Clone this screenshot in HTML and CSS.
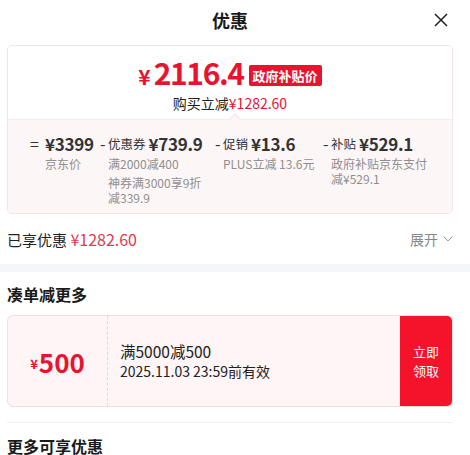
FILE: index.html
```html
<!DOCTYPE html>
<html lang="zh-CN">
<head>
<meta charset="utf-8">
<link rel="stylesheet" href="styles.css">
</head>
<body>
<div class="page">
  <header class="header">
    <span></span>
    <h1 class="title">优惠</h1>
    <button class="close" aria-label="关闭">
      <svg width="14" height="14" viewBox="0 0 14 14"><path d="M1 1L13 13M13 1L1 13" stroke="#222" stroke-width="1.5" fill="none"/></svg>
    </button>
  </header>

  <section class="card">
    <div class="card-top">
      <div class="price-row">
        <span class="price"><span class="yen">¥</span>2116.4</span>
        <span class="badge">政府补贴价</span>
      </div>
      <div class="save">购买立减<span class="red">¥1282.60</span></div>
    </div>
    <div class="card-bottom">
      <span class="notch"></span>
      <div class="calc">
        <div class="col col1">
          <span class="op op-eq">=</span>
          <div class="body">
            <div class="main"><span class="val">¥3399</span></div>
            <p class="sub">京东价</p>
          </div>
        </div>
        <div class="col col2">
          <span class="op">-</span>
          <div class="body">
            <div class="main"><span class="lbl">优惠券</span><span class="val">¥739.9</span></div>
            <p class="sub">满2000减400</p>
            <p class="sub sub-gap">神券满3000享9折减339.9</p>
          </div>
        </div>
        <div class="col col3">
          <span class="op">-</span>
          <div class="body">
            <div class="main"><span class="lbl">促销</span><span class="val">¥13.6</span></div>
            <p class="sub">PLUS立减 13.6元</p>
          </div>
        </div>
        <div class="col col4">
          <span class="op">-</span>
          <div class="body">
            <div class="main"><span class="lbl">补贴</span><span class="val">¥529.1</span></div>
            <p class="sub">政府补贴京东支付减¥529.1</p>
          </div>
        </div>
      </div>
    </div>
  </section>

  <div class="enjoyed">
    <div class="enjoyed-left">已享优惠 <span class="enjoyed-amt">¥1282.60</span></div>
    <div class="expand">展开
      <svg width="10" height="6" viewBox="0 0 10 6"><path d="M0.5 0.5L5 5L9.5 0.5" stroke="#999" stroke-width="1" fill="none"/></svg>
    </div>
  </div>
</div>

<div class="band"></div>

<div class="page">
  <h2 class="section-title">凑单减更多</h2>
  <div class="coupon">
    <div class="coupon-amt"><span class="c-yen">¥</span>500</div>
    <div class="coupon-info">
      <div class="c-rule">满5000减500</div>
      <div class="c-date">2025.11.03 23:59前有效</div>
    </div>
    <button class="c-btn"><span class="c-line">立即</span><span class="c-line">领取</span></button>
  </div>
  <div class="divider"></div>
  <h2 class="section-title more">更多可享优惠</h2>
</div>
</body>
</html>
```
FILE: styles.css
```css
* { box-sizing: border-box; }
html, body { margin: 0; padding: 0; background: #fff; }
body {
  font-family: "Noto Sans CJK SC", "Noto Sans", sans-serif;
  color: #1a1a1a;
  width: 470px;
  overflow: hidden;
}
.page { padding: 0 17px 0 7px; }

.header {
  height: 40px;
  display: grid;
  grid-template-columns: 1fr auto 1fr;
  align-items: center;
}
.title { margin: 0; font-size: 18px; font-weight: 700; line-height: 40px; color: #1a1a1a; }
.close {
  justify-self: end;
  margin-right: 5px;
  border: 0; background: none; padding: 0;
  width: 14px; height: 14px;
  display: flex;
}

.card {
  margin-top: 5px;
  border: 1px solid #f1e4e6;
  border-radius: 5px;
  overflow: hidden;
}
.card-top { padding: 9px 0 6px; text-align: center; background: #fff; }
.price-row { display: flex; justify-content: center; align-items: center; height: 38px; gap: 5px; }
.price { color: #e8132e; font-size: 30px; font-weight: 700; line-height: 38px; letter-spacing: -1.4px; }
.yen { font-size: 21px; margin-right: 3px; letter-spacing: 0; }
.badge {
  background: #e8132e; color: #fff;
  font-size: 13px; font-weight: 700;
  line-height: 21px; padding: 0 4px;
  border-radius: 2px;
  margin-top: 2px;
}
.save { font-size: 14px; line-height: 20px; color: #222; }
.red { color: #e8132e; }

.card-bottom {
  position: relative;
  background: #fdf6f7;
  border-top: 1px solid #f6eced;
  padding: 11px 0 8px 22px;
}
.notch {
  position: absolute;
  left: 223px; top: -5px;
  width: 8px; height: 8px;
  background: #fdf6f7;
  border-left: 1px solid #f3e6e8;
  border-top: 1px solid #f3e6e8;
  transform: rotate(45deg);
}
.calc { display: flex; }
.col { display: flex; align-items: flex-start; }
.col1 { width: 70px; }
.col2 { width: 115px; }
.col3 { width: 108px; }
.col4 { width: 120px; }
.op { font-size: 16px; line-height: 24px; color: #333; width: 8px; flex: none; }
.op-eq { width: 15px; }
.main { display: flex; align-items: center; height: 24px; white-space: nowrap; }
.lbl { font-size: 12.5px; color: #333; margin-right: 3px; }
.val { font-size: 17px; font-weight: 600; color: #333; letter-spacing: -0.3px; }
.sub { margin: 1px 0 0; font-size: 12px; line-height: 15px; color: #8f8f8f; }
.sub-gap { margin-top: 4px; }
.col2 .sub { max-width: 100px; }
.col4 .sub { max-width: 100px; }

.enjoyed {
  height: 50px;
  display: flex; align-items: center; justify-content: space-between;
}
.enjoyed-left { font-size: 15px; color: #222; }
.enjoyed-amt { color: #e23a50; font-size: 16px; }
.expand { font-size: 14px; color: #888; display: flex; align-items: center; gap: 5px; }

.band { height: 8px; background: #f5f6f8; }

.section-title { margin: 0; font-size: 16px; font-weight: 700; line-height: 24px; color: #1a1a1a; }
.page > .section-title:first-child { margin-top: 10px; }

.coupon {
  margin-top: 9px;
  display: flex;
  height: 92px;
  border: 1px solid #f0dde0;
  border-radius: 6px;
  background: #fdf5f6;
  overflow: hidden;
}
.coupon-amt {
  width: 100px; flex: none;
  border-right: 1px dashed #e2d6d8;
  display: flex; align-items: center; justify-content: center;
  color: #e8132e; font-size: 26px; font-weight: 700;
}
.c-yen { font-size: 13px; margin-right: 1px; margin-top: 4px; }
.coupon-info { flex: 1; padding-left: 12px; display: flex; flex-direction: column; justify-content: center; gap: 0; }
.c-rule { font-size: 15.5px; line-height: 22px; color: #222; margin-top: -1px; }
.c-date { font-size: 14px; line-height: 20px; color: #222; margin-top: -1px; }
.c-btn {
  width: 52px; flex: none;
  border: 0; background: #f5122b; color: #fff;
  font-family: inherit; font-size: 13px; line-height: 19px;
  padding: 0;
  display: flex; flex-direction: column; align-items: center; justify-content: center;
}
.c-line { display: block; }
.divider { height: 1px; background: #eeeeee; margin-top: 15px; }
.more { margin-top: 11px; }
```
